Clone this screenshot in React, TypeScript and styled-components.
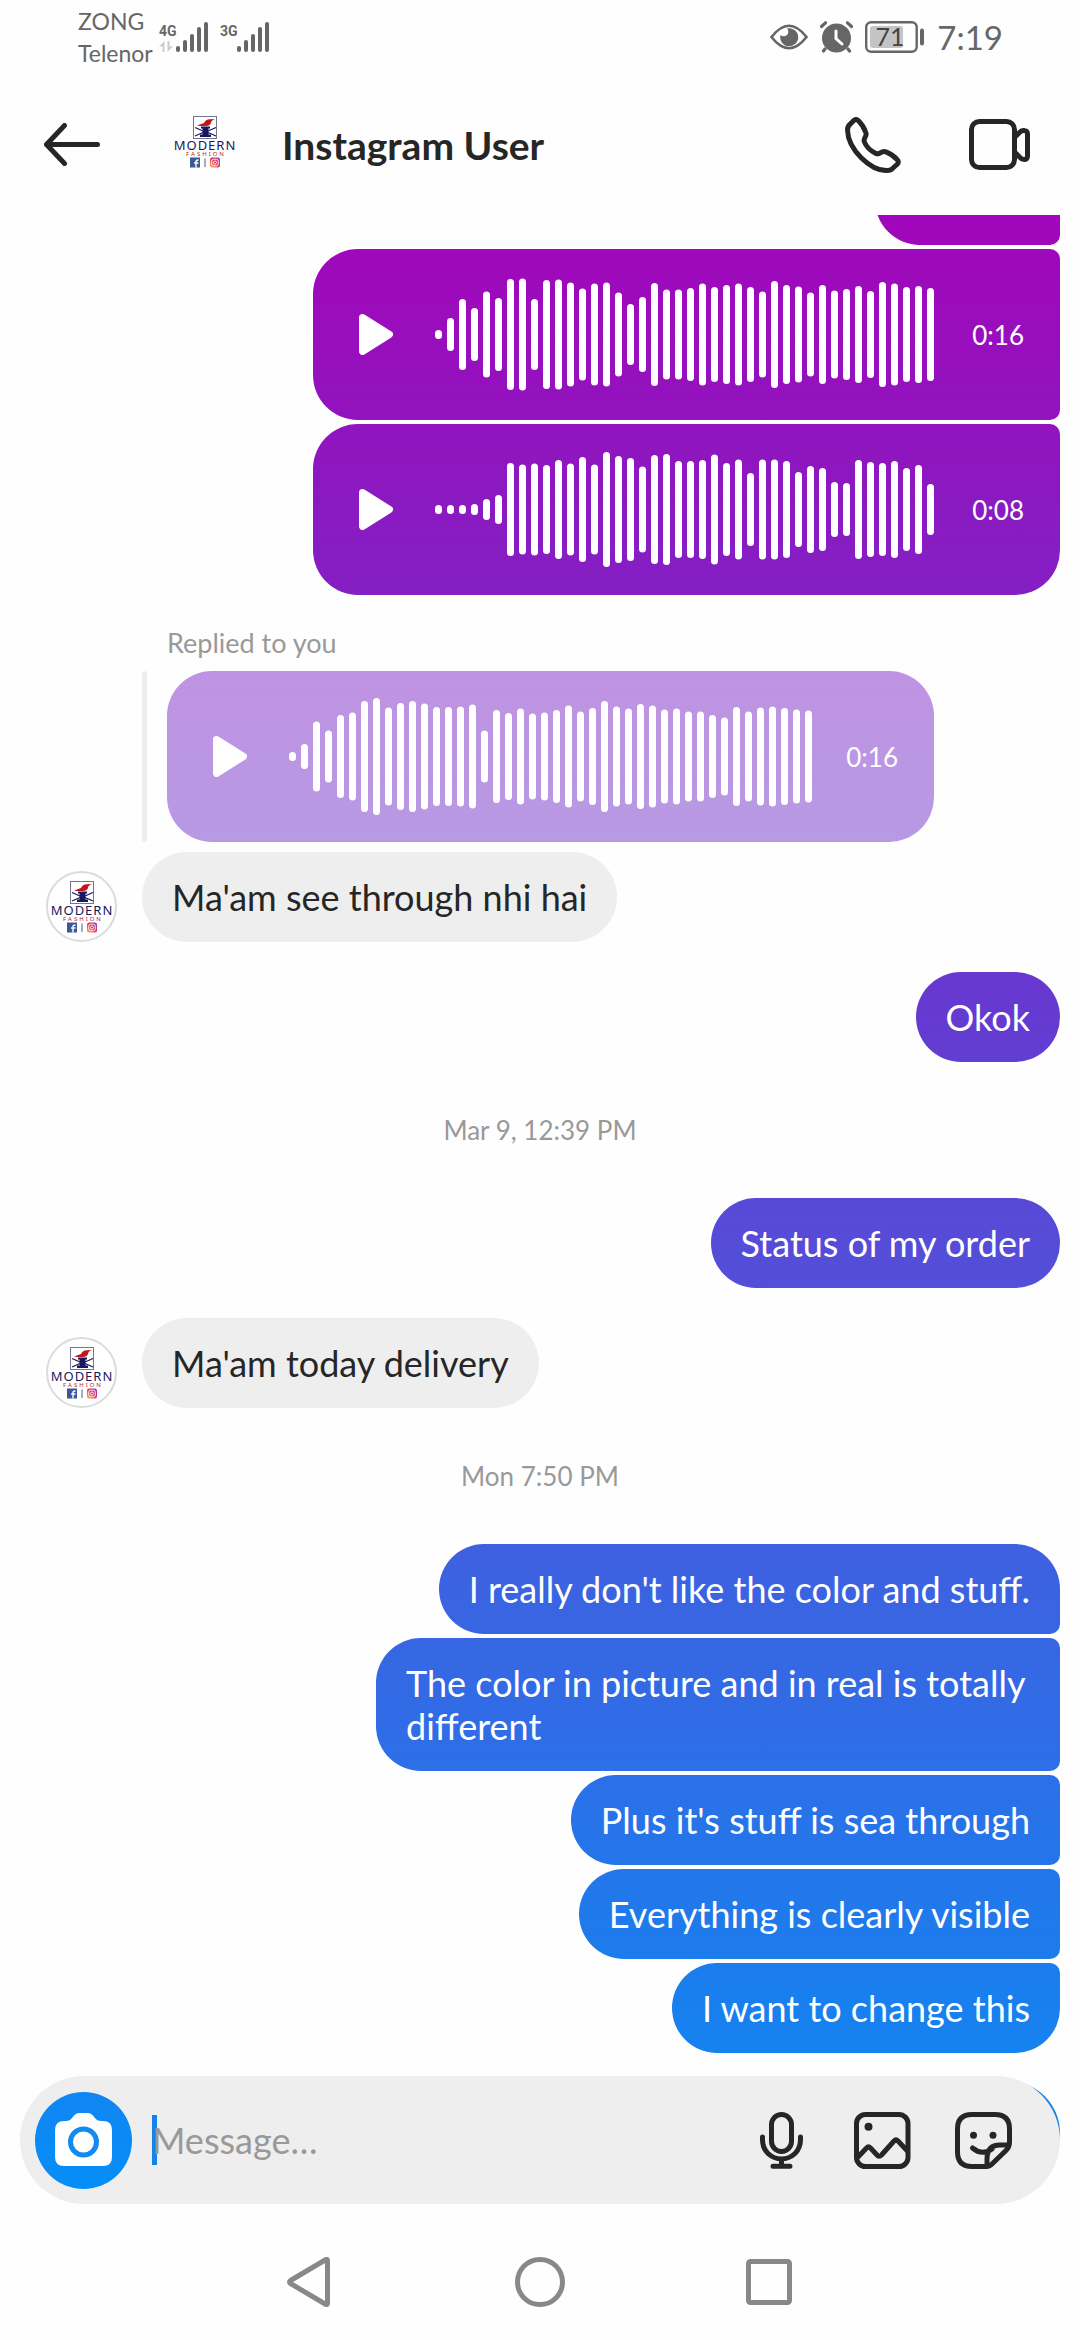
import React from 'react';
import styled, { createGlobalStyle, css } from 'styled-components';

const GlobalStyle = createGlobalStyle`
  * { box-sizing: border-box; }
  body {
    margin: 0;
    background: #fefefe;
    color: #262626;
    font-family: Lato, "Liberation Sans", sans-serif;
  }
  button {
    display: flex;
    align-items: center;
    justify-content: center;
    padding: 0;
    border: 0;
    background: none;
    color: inherit;
    font: inherit;
    cursor: pointer;
  }
  svg { display: block; flex: none; }
`;

const threadGradient = css`
  background-image: linear-gradient(
    180deg,
    #a107ba 10%,
    #841fc3 25%,
    #643bd1 44%,
    #554cd8 53%,
    #3f60e0 66%,
    #1483f0 88%,
    #048ff8 94%
  );
  background-attachment: fixed;
`;

const Screen = styled.div`
  display: flex;
  flex-direction: column;
  height: 100vh;
`;

const StatusBar = styled.div`
  flex: none;
  display: flex;
  justify-content: space-between;
  height: 74px;
  padding: 0 77px 0 78px;
  color: #666;
`;

const StatusGroup = styled.div<{ $gap: number }>`
  display: flex;
  align-items: center;
  gap: ${(p) => p.$gap}px;
`;

const Carriers = styled.div`
  font-size: 23px;
  line-height: 32px;
`;

const Clock = styled.time`
  font-size: 33px;
  line-height: 40px;
`;

const Header = styled.header`
  flex: none;
  display: flex;
  align-items: center;
  height: 141px;
  padding: 0 50px 0 44px;
`;

const Title = styled.h1`
  flex: 1;
  margin: 0 0 0 46px;
  font-size: 39px;
  line-height: 48px;
  font-weight: 700;
`;

const HeaderActions = styled.div`
  display: flex;
  align-items: center;
  gap: 68px;
`;

const HeaderLogo = styled.div`
  margin-left: 74px;
  padding-bottom: 6px;
`;

const Thread = styled.main`
  flex: 1;
  min-height: 0;
  overflow: hidden;
  display: flex;
  flex-direction: column;
  justify-content: flex-end;
  gap: 30px;
  padding: 0 20px 23px;
`;

const SentGroup = styled.section`
  flex: none;
  display: flex;
  flex-direction: column;
  align-items: flex-end;
  gap: 4px;
`;

const ReceivedGroup = styled.section`
  flex: none;
  display: flex;
  align-items: flex-end;
  gap: 25px;
  padding-left: 26px;
`;

const ReceivedColumn = styled.div`
  display: flex;
  flex-direction: column;
  align-items: flex-start;
`;

type Corners = 'single' | 'first' | 'middle' | 'last';

const radii: Record<Corners, string> = {
  single: '45px',
  first: '45px 45px 10px 45px',
  middle: '45px 10px 10px 45px',
  last: '45px 10px 45px 45px',
};

const Bubble = styled.p<{ $corners?: Corners; $received?: boolean }>`
  margin: 0;
  max-width: 684px;
  min-height: 90px;
  padding: 24px 30px 23px;
  border-radius: ${(p) => radii[p.$corners ?? 'single']};
  font-size: 36px;
  line-height: 43px;
  ${(p) => (p.$received ? 'background: #eee; color: #262626;' : threadGradient)}
  ${(p) => !p.$received && 'color: #fff;'}
`;

const ShortBubble = styled(Bubble)`
  width: 185px;
`;

const VoiceBubble = styled.div<{ $corners?: Corners; $wide?: boolean; $faded?: boolean }>`
  display: flex;
  align-items: center;
  width: ${(p) => (p.$wide ? 767 : 747)}px;
  height: 171px;
  padding: 0 36px 0 46px;
  border-radius: ${(p) => radii[p.$corners ?? 'single']};
  color: #fff;
  ${(p) => (p.$faded ? 'background: linear-gradient(#bf93e2, #b799e4);' : threadGradient)}
`;

const Wave = styled.svg`
  margin-left: 42px;
`;

const Duration = styled.span`
  flex: 1;
  text-align: right;
  font-size: 26px;
  line-height: 32px;
`;

const ReplyLabel = styled.span`
  margin: 0 0 10px 25px;
  font-size: 27px;
  line-height: 36px;
  color: #999;
`;

const Quote = styled.blockquote`
  display: flex;
  gap: 20px;
  margin: 0 0 10px;
`;

const QuoteBar = styled.span`
  width: 5px;
  border-radius: 3px;
  background: #eee;
`;

const Avatar = styled.div`
  flex: none;
  display: flex;
  align-items: center;
  justify-content: center;
  width: 71px;
  height: 71px;
  border: 2px solid #dbdbdb;
  border-radius: 50%;
  background: #fff;
`;

const DateLabel = styled.time`
  flex: none;
  text-align: center;
  font-size: 26px;
  line-height: 76px;
  color: #999;
`;

const Composer = styled.form`
  flex: none;
  position: relative;
  z-index: 0;
  display: flex;
  align-items: center;
  height: 128px;
  margin: 0 20px;
  padding: 0 48px 0 15px;
  border-radius: 64px;

  &::before,
  &::after {
    content: '';
    position: absolute;
    z-index: -1;
  }
  &::before {
    top: 5px;
    right: 0;
    width: 60px;
    height: 59px;
    border-top-right-radius: 52px;
    background: #1a80dd;
  }
  &::after {
    inset: 0;
    border-radius: 64px;
    background: #eee;
  }
`;

const CameraButton = styled.button`
  && {
    flex: none;
    width: 97px;
    height: 97px;
    border-radius: 50%;
    ${threadGradient}
  }
`;

const Field = styled.label`
  position: relative;
  flex: 1;
  min-width: 0;
  display: flex;
  align-items: center;
  margin-left: 20px;

  &::before {
    content: '';
    position: absolute;
    left: 0;
    width: 5px;
    height: 50px;
    background: #1583ea;
  }
`;

const MessageInput = styled.input`
  position: relative;
  width: 100%;
  padding: 0;
  border: 0;
  outline: 0;
  background: none;
  font: 36px/50px Lato, "Liberation Sans", sans-serif;
  color: #262626;
  &::placeholder { color: #999; opacity: 1; }
`;

const ComposerActions = styled.div`
  display: flex;
  align-items: center;
  gap: 44px;
`;

const SystemNav = styled.nav`
  flex: none;
  display: flex;
  align-items: center;
  justify-content: center;
  gap: 179px;
  height: 116px;
  margin-top: 20px;
  color: #888;
`;

const waveA = [9, 33, 71, 53, 86, 73, 111, 112, 71, 109, 110, 104, 92, 102, 104, 84, 61, 75, 103, 90, 90, 93, 102, 95, 99, 102, 95, 86, 107, 99, 96, 84, 99, 88, 91, 97, 87, 105, 102, 95, 97, 93];
const waveB = [9, 9, 9, 11, 21, 29, 93, 90, 92, 89, 99, 92, 105, 90, 115, 107, 103, 86, 109, 111, 97, 97, 99, 110, 93, 100, 73, 100, 100, 97, 75, 87, 83, 55, 53, 99, 95, 93, 97, 83, 89, 51];
const waveC = [9, 25, 70, 52, 83, 88, 111, 117, 98, 107, 111, 106, 99, 99, 100, 104, 52, 93, 87, 96, 86, 88, 93, 102, 90, 97, 111, 100, 96, 105, 102, 94, 96, 90, 90, 83, 78, 99, 90, 98, 100, 97, 94, 92];

function Waveform({ levels }: { levels: number[] }) {
  const width = levels.length * 12 - 5;
  return (
    <Wave width={width} height={119} viewBox={`0 0 ${width} 119`} aria-hidden="true">
      {levels.map((h, i) => (
        <rect key={i} x={i * 12} y={(119 - h) / 2} width={7} height={h} rx={3.5} fill="#fff" />
      ))}
    </Wave>
  );
}

interface VoiceProps {
  levels: number[];
  duration: string;
  corners?: Corners;
  wide?: boolean;
  faded?: boolean;
}

function VoiceMessage({ levels, duration, corners, wide, faded }: VoiceProps) {
  return (
    <VoiceBubble $corners={corners} $wide={wide} $faded={faded}>
      <button type="button" aria-label="Play voice message">
        <svg width="34" height="41" viewBox="0 0 34 41">
          <path d="M3.5 3.5 30.5 20.5 3.5 37.5Z" fill="#fff" stroke="#fff" strokeWidth="7" strokeLinejoin="round" />
        </svg>
      </button>
      <Waveform levels={levels} />
      <Duration>{duration}</Duration>
    </VoiceBubble>
  );
}

function BrandLogo() {
  return (
    <svg width="62" height="52" viewBox="0 0 62 52" role="img" aria-label="Modern Fashion">
      <defs>
        <linearGradient id="ig" x1="0" y1="1" x2="1" y2="0">
          <stop offset="0" stopColor="#fdb944" />
          <stop offset="0.5" stopColor="#e5315f" />
          <stop offset="1" stopColor="#8a3ac8" />
        </linearGradient>
      </defs>
      <rect x="19.5" y="0.5" width="23" height="22" fill="#fff" stroke="#77758f" />
      <path d="M23 9.5 30 7Q32 3 36 3.3L41 3Q37 4.5 37 7 36 10 32 10H26Z" fill="#c3161c" />
      <path d="M27 10.5H36V12.5H34.5V18.500H37V21H26V18.500H28.500V12.500H27Z" fill="#17195c" />
      <path d="M21 11.500 29 15M42 11.500 34 15M21 20 29 16.500M42 20 34 16.500" stroke="#17195c" strokeWidth="1.300" />
      <text x="31" y="34" textAnchor="middle" fontFamily="Noto Sans" fontSize="13" letterSpacing="1" fill="#17195c">MODERN</text>
      <text x="32" y="40" textAnchor="middle" fontFamily="Noto Sans" fontSize="6" letterSpacing="2" fill="#b3262b">FASHION</text>
      <rect x="16" y="41.500" width="10" height="10" fill="#3b5998" />
      <path d="M22 51.500V47M20 47H24.500M22 47V45.500Q22 44 24.500 44" stroke="#fff" strokeWidth="1.400" fill="none" />
      <path d="M31 42.500V51" stroke="#55577f" />
      <rect x="36" y="41.500" width="10" height="10" rx="2" fill="url(#ig)" />
      <rect x="37.700" y="43.200" width="6.600" height="6.600" rx="2" fill="none" stroke="#fff" strokeWidth="0.900" />
      <circle cx="41" cy="46.500" r="1.500" fill="none" stroke="#fff" strokeWidth="0.900" />
    </svg>
  );
}

function Signal({ network, data }: { network: string; data?: boolean }) {
  return (
    <svg width="50" height="32" viewBox="0 0 50 32" role="img" aria-label={`${network} signal`}>
      <text x="0" y="15" fontFamily="Roboto" fontSize="14" fontWeight="700" fill="#666">{network}</text>
      {data && <path d="M0 25.500 5.500 20V31H3.500V25.500ZM8.500 20H10.500V25.500H14L8.500 31Z" fill="#ccc" />}
      {[25, 19, 13, 6, 1].map((top, i) => (
        <rect key={top} x={17 + i * 7} y={top} width="4" height={31 - top} rx="2" fill="#666" />
      ))}
    </svg>
  );
}

const stroke = {
  fill: 'none',
  stroke: 'currentColor',
  strokeWidth: 5,
  strokeLinecap: 'round' as const,
  strokeLinejoin: 'round' as const,
};

export default function App() {
  return (
    <Screen>
      <GlobalStyle />
      <StatusBar>
        <StatusGroup $gap={6}>
          <Carriers>
            ZONG
            <br />
            Telenor
          </Carriers>
          <StatusGroup $gap={11}>
            <Signal network="4G" data />
            <Signal network="3G" />
          </StatusGroup>
        </StatusGroup>
        <StatusGroup $gap={12}>
          <svg width="38" height="26" viewBox="0 0 38 26" aria-hidden="true">
            <path d="M1.500 13Q19-9.500 36.500 13 19 35.500 1.500 13Z" fill="none" stroke="#666" strokeWidth="2.600" />
            <path d="M17 4.500A9 9 0 1 1 10.500 11 4.500 4.500 0 1 0 17 4.500Z" fill="#666" />
          </svg>
          <svg width="33" height="32" viewBox="0 0 33 32" aria-hidden="true">
            <circle cx="16.500" cy="17" r="14.500" fill="#666" />
            <path d="M1.500 5.500 5.500 1.800M31.500 5.500 27.500 1.800M5 28 3.500 30M28 28 29.500 30" stroke="#666" strokeWidth="3.200" strokeLinecap="round" />
            <path d="M16 10V17.500L22 23" fill="none" stroke="#fff" strokeWidth="3" strokeLinecap="round" />
          </svg>
          <svg width="60" height="32" viewBox="0 0 60 32" role="img" aria-label="Battery 71 percent">
            <rect x="1.200" y="1.200" width="50.500" height="29.600" rx="5" fill="none" stroke="#666" strokeWidth="2.400" />
            <rect x="5" y="5" width="33" height="22" rx="3" fill="#c4c4c4" />
            <text x="25" y="25" textAnchor="middle" fontFamily="Lato" fontSize="25" fill="#444">71</text>
            <rect x="55" y="7.500" width="4" height="17" rx="2" fill="#666" />
          </svg>
          <Clock>7:19</Clock>
        </StatusGroup>
      </StatusBar>

      <Header>
        <button type="button" aria-label="Back">
          <svg width="56" height="43" viewBox="0 0 56 43" {...stroke}>
            <path d="M2.500 21.500H53.500M20.500 2.500 2.500 21.500 20.500 40.500" />
          </svg>
        </button>
        <HeaderLogo>
          <BrandLogo />
        </HeaderLogo>
        <Title>Instagram User</Title>
        <HeaderActions>
          <button type="button" aria-label="Voice call">
            <svg width="56" height="56" viewBox="0 0 56 56" {...stroke}>
              <path d="M9 3.200 4.800 7.500Q2.500 9.500 2.500 13C3 33 26 54 42 53.500Q46 53.500 47.500 51.500L52.500 47Q54 45 52.500 43 48 37.500 41 34.800 39 34 37 35L34 36.500Q32.500 37.200 30.500 36.200 22 32 19.200 24.500 18.800 22.500 20 20.500 21.800 17.500 20.800 15.500 18.500 8.500 13 3.200 11 1.800 9 3.200Z" />
            </svg>
          </button>
          <button type="button" aria-label="Video call">
            <svg width="61" height="51" viewBox="0 0 61 51" {...stroke}>
              <rect x="2.500" y="2.500" width="43" height="46" rx="8" />
              <path d="M46 18 51 13Q53 11 55.500 11.500 58.500 12 58.500 15V37Q58.500 40 56 40.500 53 41 51 38.500L46 33.500" />
            </svg>
          </button>
        </HeaderActions>
      </Header>

      <Thread>
        <SentGroup>
          <ShortBubble $corners="middle" />
          <VoiceMessage levels={waveA} duration="0:16" corners="middle" />
          <VoiceMessage levels={waveB} duration="0:08" corners="last" />
        </SentGroup>
        <ReceivedGroup>
          <Avatar><BrandLogo /></Avatar>
          <ReceivedColumn>
            <ReplyLabel>Replied to you</ReplyLabel>
            <Quote>
              <QuoteBar />
              <VoiceMessage levels={waveC} duration="0:16" wide faded />
            </Quote>
            <Bubble $received>Ma'am see through nhi hai</Bubble>
          </ReceivedColumn>
        </ReceivedGroup>
        <SentGroup>
          <Bubble>Okok</Bubble>
        </SentGroup>
        <DateLabel>Mar 9, 12:39 PM</DateLabel>
        <SentGroup>
          <Bubble>Status of my order</Bubble>
        </SentGroup>
        <ReceivedGroup>
          <Avatar><BrandLogo /></Avatar>
          <Bubble $received>Ma'am today delivery</Bubble>
        </ReceivedGroup>
        <DateLabel>Mon 7:50 PM</DateLabel>
        <SentGroup>
          <Bubble $corners="first">I really don't like the color and stuff.</Bubble>
          <Bubble $corners="middle">The color in picture and in real is totally different</Bubble>
          <Bubble $corners="middle">Plus it's stuff is sea through</Bubble>
          <Bubble $corners="middle">Everything is clearly visible</Bubble>
          <Bubble $corners="last">I want to change this</Bubble>
        </SentGroup>
      </Thread>

      <Composer onSubmit={(e) => e.preventDefault()}>
        <CameraButton type="button" aria-label="Open camera">
          <svg width="57" height="54" viewBox="0 0 57 54">
            <path d="M9 8H11Q15 8 17 5L19.500 2Q21.500 0 24 0H33Q35.500 0 37.500 2L40 5Q42 8 46 8H48Q57 8 57 17V44Q57 53 48 53H9Q0 53 0 44V17Q0 8 9 8Z" fill="#fff" />
            <circle cx="28.500" cy="29" r="13" fill="none" stroke="#118af1" strokeWidth="5" />
          </svg>
        </CameraButton>
        <Field>
          <MessageInput type="text" placeholder="Message…" aria-label="Message" />
        </Field>
        <ComposerActions>
          <button type="button" aria-label="Record voice message">
            <svg width="57" height="57" viewBox="-7 0 57 57" {...stroke}>
              <rect x="11.500" y="2.500" width="20" height="37" rx="10" />
              <path d="M2.500 25V27.500Q2.500 36 8 41.500 14 47 21.500 47T35 41.500Q40.500 36 40.500 27.500V25M21.500 47V54M13 54.200H30" />
            </svg>
          </button>
          <button type="button" aria-label="Send a photo">
            <svg width="57" height="57" viewBox="0 0 57 57" {...stroke}>
              <rect x="2.500" y="2.500" width="51.500" height="52" rx="9" />
              <path d="M4 45 12.500 36Q14.500 34 16.500 36L23 43Q25 45.500 27.500 43L40 29Q42 27 44 29L53 38.500" />
              <circle cx="14.500" cy="14.800" r="4" fill="currentColor" stroke="none" />
            </svg>
          </button>
          <button type="button" aria-label="Stickers">
            <svg width="57" height="57" viewBox="0 0 57 57" {...stroke}>
              <path d="M31 54.500H17Q2.500 54.500 2.500 40V17Q2.500 2.500 17 2.500H40Q54.500 2.500 54.500 17V30Q54.500 35 51 38.500L37.500 51.500Q35 54.500 31 54.500Z" />
              <path d="M32 54V47Q32 33 45 33H53M17.500 36Q27 44 37 37" />
              <circle cx="18.500" cy="23.200" r="3.500" fill="currentColor" stroke="none" />
              <circle cx="38" cy="23.200" r="3.500" fill="currentColor" stroke="none" />
            </svg>
          </button>
        </ComposerActions>
      </Composer>

      <SystemNav aria-label="System navigation">
        <button type="button" aria-label="Back">
          <svg width="50" height="50" viewBox="-1 0 50 50" {...stroke}>
            <path d="M39 2.500Q40.500 2 40.500 4V46Q40.500 48 39 47.500L3.500 26.500Q1.500 25 3.500 23.500Z" />
          </svg>
        </button>
        <button type="button" aria-label="Home">
          <svg width="50" height="50" viewBox="0 0 50 50" {...stroke}>
            <circle cx="25" cy="25" r="22.500" />
          </svg>
        </button>
        <button type="button" aria-label="Recent apps">
          <svg width="50" height="50" viewBox="-2 -2 50 50" {...stroke}>
            <rect x="2.500" y="2.500" width="41" height="41" rx="2" />
          </svg>
        </button>
      </SystemNav>
    </Screen>
  );
}
